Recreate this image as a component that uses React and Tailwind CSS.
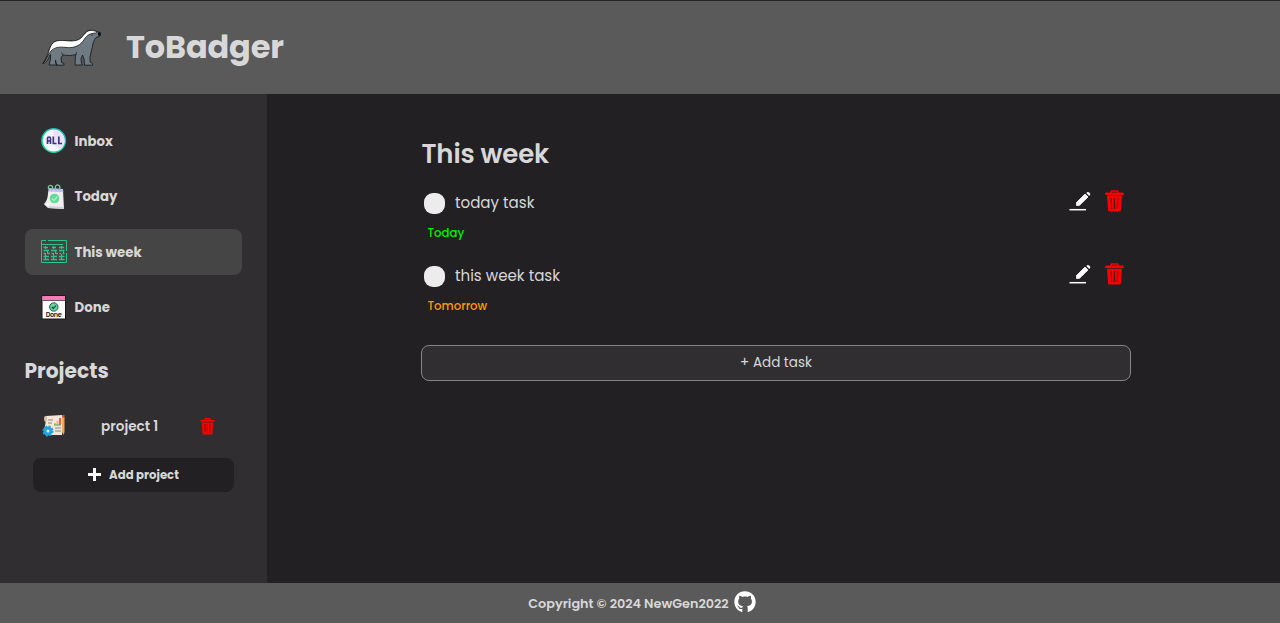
import { FaGithub } from "react-icons/fa";

function BadgerLogo() {
  return (
    <svg className="h-[38px] w-[60px]" viewBox="0 0 60 38" aria-hidden="true">
      <path
        d="M1.500 34.500C4 33 5 29 7 25C8 20 10 15 14 12.500C20 10 29 13 35 11.500C41 10 42 6 45 3C47 1 50 .8 53 2L58.500 3.200C60 4.500 59.500 6.500 58.500 7.300L55 8.500C53 11 52 14 51.500 17C51 21 49.500 24 49 28L49 33L51.500 34.500V36.200H43.500L43 30L41.500 26L40 30L40.500 34.500L41.500 36H34L34.500 25.500C30 27 27 26.500 22 26L20 29L20.500 33.500L23 34.500V36.200H15.500L14.500 31L14.500 34L16.500 36H8L9.500 30L9.500 25.500L8.500 27C7 31 5 34.500 1.500 34.500Z"
        fill="#6f7a82" stroke="#1b1d20" strokeWidth="0.900" strokeLinejoin="round"
      />
      <path
        d="M2 34C6 30 6.500 26 10 22C13 18.500 18 17.500 25 18.500C34 19.500 40 16 43.500 10C46 6 49 4.500 54.500 4L56 2.800C52 1 48 .8 45.500 3C42 6 41 10 35 11.500C28 13 20 10 14 12.500C9 15.500 8.500 21 7 25C5 30 4 32 2 34Z"
        fill="#fff" stroke="#18191b" strokeWidth="0.800"
      />
      <path d="M22 26L20.500 23.500M35 26L35.500 23M50 6L52 6" stroke="#222" strokeWidth="0.800" fill="none" />
      <ellipse cx="58.300" cy="5" rx="1.500" ry="1.900" fill="#111" />
    </svg>
  );
}

function InboxIcon() {
  return (
    <svg className="size-[26px]" viewBox="0 0 26 26" aria-hidden="true">
      <defs>
        <linearGradient id="ring" x1="0" y1="1" x2="1" y2="0">
          <stop offset="0" stopColor="#16e58d" />
          <stop offset="1" stopColor="#13b4bd" />
        </linearGradient>
      </defs>
      <circle cx="12.700" cy="12.500" r="11.700" fill="#f8f4ff" stroke="url(#ring)" strokeWidth="1.600" />
      <path d="M12 2A11 11 0 0 1 19 22L14 17Z" fill="#e9e2f7" />
      <path d="M6.500 16V10.500Q6.500 9 8 9Q9.500 9 9.500 10.500V16M6.500 13H9.500M12.300 8.500V15.500H15.500M17.800 8.500V15.500H21" fill="none" stroke="#3d3280" strokeWidth="1.700" />
    </svg>
  );
}

function TodayIcon() {
  return (
    <svg className="size-[26px]" viewBox="0 0 26 26" aria-hidden="true">
      <path d="M8 5L22 6L23 25L7 24L3 20Q7 16 7 9Z" fill="#f0edef" />
      <path d="M8 4L22 5L22.300 8L7.300 7.500Z" fill="#bdbcf3" />
      <path d="M3 20Q7 21 7 18L8 24Z" fill="#fff" />
      <path d="M7 24L23 25V23L8 22Z" fill="#d5d1d6" />
      <path d="M8 5.500C6 2 9 .5 11 2Q12.500 4 10.500 5.500M15 5.500C13 2 16 0 18 1.500Q20 4 17.500 6" fill="none" stroke="#78c79b" strokeWidth="1.300" />
      <circle cx="13.500" cy="14.500" r="4.800" fill="#61dc98" />
      <path d="M11 14.500L13 16.500L16.500 12.500" fill="none" stroke="#a4f2c3" strokeWidth="1.300" />
    </svg>
  );
}

function WeekIcon() {
  return (
    <svg className="size-[26px]" viewBox="0 0 26 26" fill="none" stroke="#2bc58a" aria-hidden="true">
      <path d="M7 1.500H25.500V12M25.500 14V23.500H.5V1.500H5M.5 5.500H22" strokeWidth="1" />
      <path d="M2.500 8.500H7M11 8.500H15M18 8.500H23M2.500 11.500H8M10 11.500H16M18 11.500H23.500M2.500 14.500H5M7 14.500H9M10.500 14.500H13M15 14.500H17M18.500 14.500H20M21.500 14.500H23.500M2.500 17.500H8M10 17.500H16M18 17.500H23.500M2.500 20.500H8M10 20.500H16M18 20.500H23.500" strokeWidth="1.400" />
      <path d="M4.500 7V10M12.500 7V10M20.500 7V10M6.500 12V15M14.500 12V15M22.500 12V15M4.500 15V20M12.500 15V20M20.500 15V20" />
    </svg>
  );
}

function DoneIcon() {
  return (
    <svg className="size-[26px]" viewBox="0 0 26 26" aria-hidden="true">
      <rect x="1" y="2" width="23.500" height="23" fill="#fcfcfc" stroke="#161417" />
      <path d="M1.500 2H24V6.300H1.500Z" fill="#f57ab5" />
      <path d="M1.500 6.500H24" stroke="#4a3442" strokeWidth="0.800" />
      <path d="M1.500 1.500H24" stroke="#161417" strokeDasharray="1 1" />
      <circle cx="12.800" cy="13" r="4.200" fill="#60d6a1" stroke="#2c5a4c" />
      <path d="M10.800 13L12.400 14.500L15 11.500" fill="none" stroke="#14332a" strokeWidth="1.100" />
      <text x="12.800" y="23" textAnchor="middle" textLength="16" fontFamily="Poppins, Inter" fontSize="6.500" fontWeight="600" fill="#222">Done</text>
    </svg>
  );
}

function ProjectIcon() {
  return (
    <svg className="size-[24px]" viewBox="0 0 24 24" aria-hidden="true">
      <path d="M4 2L20 1V21H8L2 17L4 6Z" fill="#f4e5d6" />
      <path d="M3 2Q1 4 3 8L5 7V2Z" fill="#d7c1ad" />
      <path d="M20 3H22.500V18L21.500 21L20 18Z" fill="#f2a45a" />
      <path d="M20 1H22.500V3.500H20Z" fill="#df4b37" />
      <path d="M13 9V11M15.500 7V11" stroke="#eeb73c" strokeWidth="1.800" />
      <path d="M18 4V11" stroke="#e94f35" strokeWidth="1.800" />
      <path d="M12 11H19" stroke="#38ad70" />
      <path d="M6 6H11M6 9H10M13 14H19M13 17H19" stroke="#aaa6a4" strokeWidth="1.300" />
      <circle cx="6" cy="17" r="4.600" fill="#20a5df" stroke="#20a5df" strokeWidth="2" strokeDasharray="2 1.613" />
      <circle cx="6" cy="17" r="1.500" fill="#d4f1fc" />
    </svg>
  );
}

function PencilIcon() {
  return (
    <svg className="h-[20px] w-[22px]" viewBox="0 0 22 20" aria-hidden="true">
      <path d="M.5 18.700H17" stroke="#fff" strokeWidth="1.500" />
      <path d="M7.500 14.500V11.500L16 3L19 6L10.500 14.300Z" fill="#fff" stroke="#fff" strokeWidth="0.800" />
      <path d="M17.300 2L18.200 1.200Q19.300 .7 20.500 1.800Q22 3 21 4L20.200 5Z" fill="#fff" />
    </svg>
  );
}

function TrashIcon({ className }) {
  return (
    <svg className={className} viewBox="0 0 19 22" fill="none" aria-hidden="true">
      <path d="M5.500 3L6.500 .9H12.500L13.500 3" stroke="#fa0000" strokeWidth="1.500" />
      <path d="M.3 3.500Q.3 2.500 1.300 2.500H17.700Q18.700 2.500 18.700 3.500V5H.3Z" fill="#fa0000" />
      <path d="M2 5.800H17L15.900 20Q15.800 21.500 14.300 21.500H4.700Q3.200 21.500 3.100 20Z" fill="#fa0000" />
      <path d="M6.200 8L6.700 19M9.500 8V19M12.800 8L12.300 19" stroke="#4d1113" strokeWidth="1.100" />
    </svg>
  );
}

const navigation = [
  { label: "Inbox", Icon: InboxIcon },
  { label: "Today", Icon: TodayIcon },
  { label: "This week", Icon: WeekIcon, active: true },
  { label: "Done", Icon: DoneIcon },
];

const tasks = [
  { title: "today task", due: "Today", dueStyle: "text-[#00f000]" },
  { title: "this week task", due: "Tomorrow", dueStyle: "text-[#ff9800]" },
];

export default function App() {
  return (
    <div className="flex h-[623px] w-full flex-col overflow-hidden bg-[#232023] font-['Poppins','Inter',sans-serif] text-[#d8d8d8]">
      <header className="flex h-[94px] shrink-0 items-center border-t border-[#252225] bg-[#5a5a5a] pl-[41px]">
        <BadgerLogo />
        <h1 className="mb-[2px] ml-[25px] text-[32px] leading-[48px] font-bold tracking-[-0.150px]">ToBadger</h1>
      </header>

      <div className="flex min-h-0 flex-1">
        <aside className="w-[267px] shrink-0 bg-[#312e31] px-[25px] pt-6">
          <nav className="flex flex-col gap-[8.400px]">
            {navigation.map(({ label, Icon, active }) => (
              <button key={label} className={`flex h-[46.900px] w-[217px] items-center gap-[7.500px] rounded-lg pl-4 text-[13.333px] font-bold ${active ? "bg-[#454545]" : ""}`}>
                <Icon />
                <span className="pt-px">{label}</span>
              </button>
            ))}
          </nav>
          <h2 className="mt-6 -ml-[0.500px] text-[20.200px] leading-8 font-bold">Projects</h2>
          <div className="mt-[16px] flex h-[47px] w-[217px] items-center pl-[17px]">
            <ProjectIcon />
            <span className="ml-[35px] flex-1 pt-[2px] text-[13.600px] font-semibold">project 1</span>
            <TrashIcon className="mr-[27px] h-[17px] w-[15px]" />
          </div>
          <button className="mt-[8px] ml-2 flex h-[34px] w-[201px] items-center justify-center rounded-lg bg-[#232023] text-[11.700px] font-bold">
            <svg className="mr-2 size-[13px]" viewBox="0 0 13 13"><path d="M6.500 0V13M0 6.500H13" stroke="#fff" strokeWidth="3" /></svg>
            <span className="pt-[2px]">Add project</span>
          </button>
        </aside>

        <main className="flex-1 pt-[40px] pl-[154px]">
          <div className="w-[710px]">
            <h2 className="pl-[0.500px] text-[26px] leading-10 font-semibold tracking-[-0.150px]">This week</h2>
            <ul>
              {tasks.map(({ title, due, dueStyle }) => (
                <li key={title} className="h-[73.300px] pt-[17px]">
                  <div className="flex h-6 items-center pl-[3px]">
                    <span className="mt-[1px] size-[21px] rounded-[9px] bg-[#ececec]" />
                    <span className="ml-[10px] flex-1 pt-px text-[15.100px]">{title}</span>
                    <div className="flex items-center pr-[7px] pb-[4px]">
                      <PencilIcon />
                      <TrashIcon className="ml-[14px] h-[22px] w-[19px]" />
                    </div>
                  </div>
                  <p className={`mt-[9px] pl-[6.500px] text-[11.700px] leading-[18px] font-medium ${dueStyle}`}>{due}</p>
                </li>
              ))}
            </ul>
            <button className="mt-[24.400px] flex h-9 w-full items-center justify-center rounded-lg border border-[#858585] bg-[#312e31] pt-px text-[13.500px]">+ Add task</button>
          </div>
        </main>
      </div>

      <footer className="flex h-10 shrink-0 items-center justify-center gap-[5px] bg-[#5a5a5a] pl-1 text-[12.800px] font-semibold">
        <span className="pt-[2px]">Copyright © 2024 NewGen2022</span>
        <FaGithub className="mb-[3px] size-[22px] text-white" />
      </footer>
    </div>
  );
}
